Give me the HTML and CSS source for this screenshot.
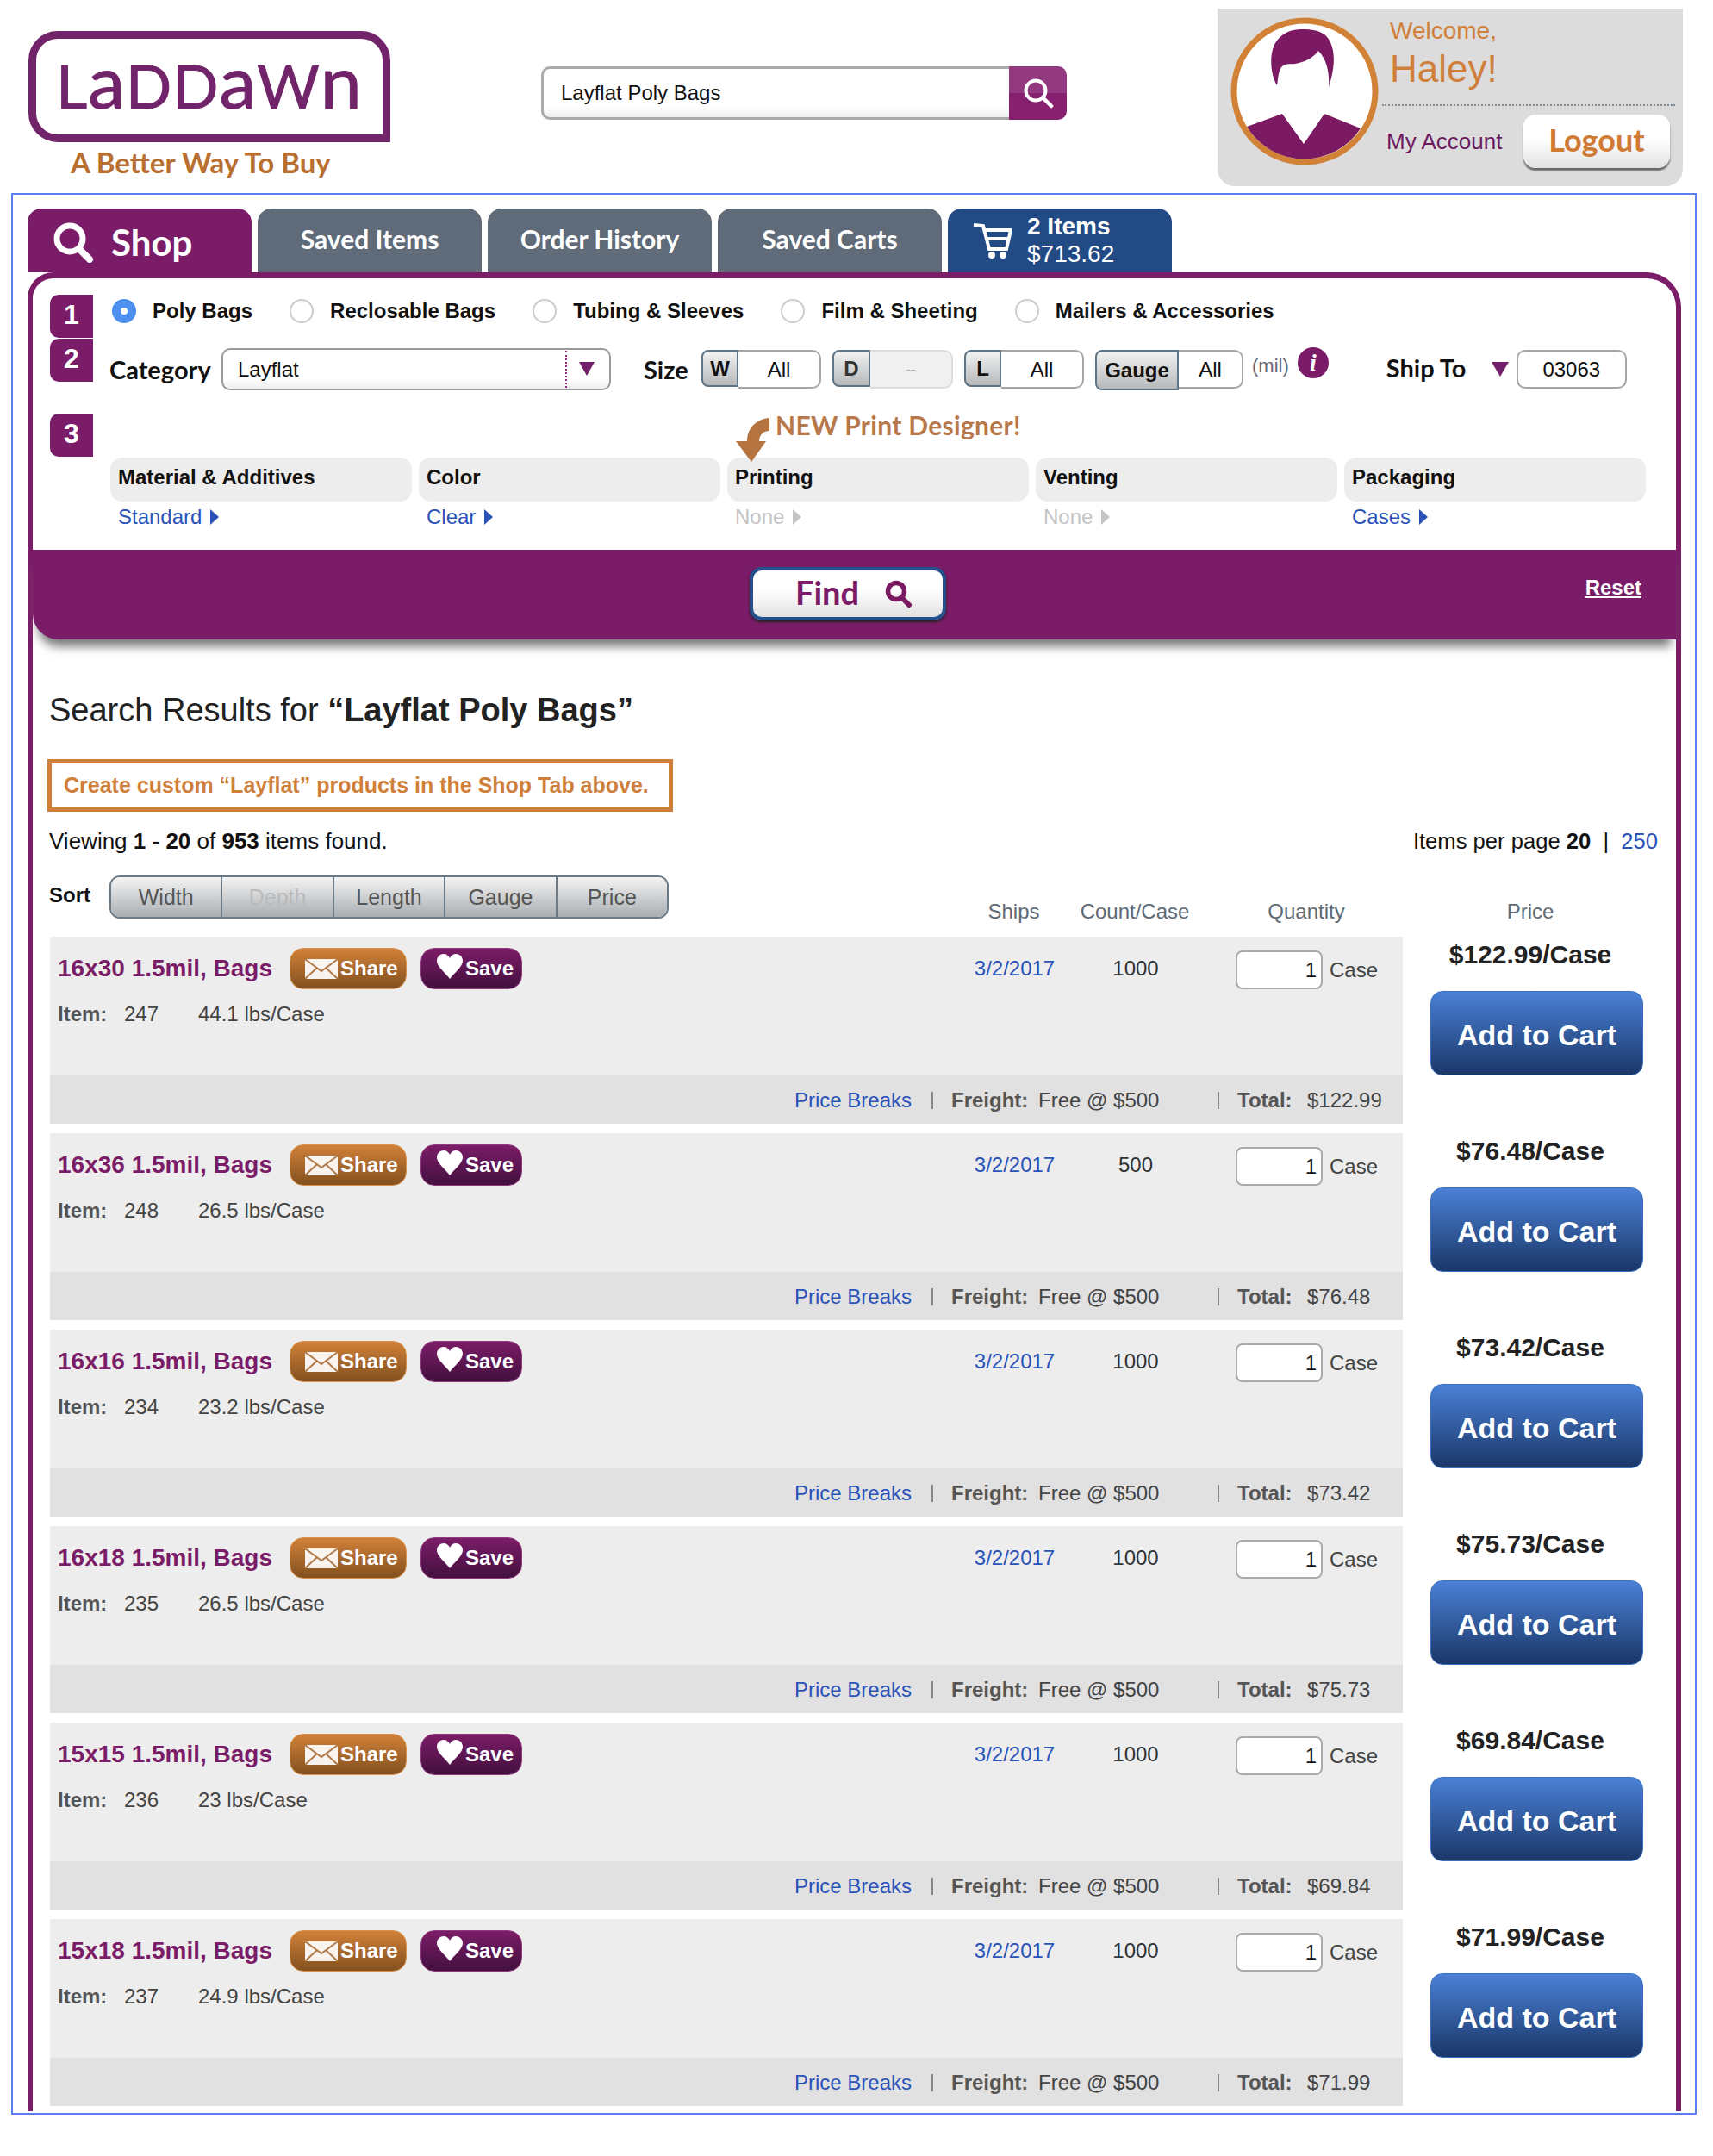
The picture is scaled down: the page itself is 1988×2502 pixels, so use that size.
FILE: index.html
```html
<!doctype html>
<html>
<head>
<meta charset="utf-8">
<title>Laddawn - Search Results</title>
<link rel="stylesheet" href="styles.css">
</head>
<body>
<div class="header">
	<div class="brand">
		<div class="logo"><span>L</span><span class="low">a</span><span>DD</span><span class="low">a</span><span>W</span><span class="low">n</span></div>
		<div class="tagline">A Better Way To Buy</div>
	</div>
	<div class="search">
		<div class="search-text">Layflat Poly Bags</div>
		<div class="search-btn">
			<svg width="36" height="36" viewBox="0 0 36 36"><circle cx="15" cy="15" r="11.5" fill="none" stroke="#fff" stroke-width="4"/><path d="M23 23L33 33" stroke="#fff" stroke-width="4.5" stroke-linecap="round"/></svg>
		</div>
	</div>
	<div class="account">
		<svg class="avatar" width="172" height="172" viewBox="0 0 172 172">
			<circle cx="86" cy="86" r="82" fill="#fff" stroke="#d28236" stroke-width="7"/>
			<path d="M54 79C46 66 44 40 54 27C62 17 72 14 82 14C96 14 104 16 109 20C119 28 125 48 114 81C115 68 113 50 102 39C97 46 88 52 75 54C68 55 61 52 57 62C55 68 55 74 54 79Z" fill="#7b1a62"/>
			<path d="M19 127L60 112L85 147L109 112L151 129A78 78 0 0 1 19 127Z" fill="#7b1a62"/>
		</svg>
		<div class="account-info">
			<div class="welcome">Welcome,</div>
			<div class="hello">Haley!</div>
			<div class="account-row">
				<a class="my-account">My Account</a>
				<div class="logout">Logout</div>
			</div>
		</div>
	</div>
</div>

<div class="main">
	<div class="tabs">
		<div class="tab tab-shop">
			<svg width="50" height="48" viewBox="0 0 50 48"><circle cx="20" cy="20" r="15" fill="none" stroke="#fff" stroke-width="7"/><path d="M31 32L43 44" stroke="#fff" stroke-width="8" stroke-linecap="round"/></svg>
			<span>Shop</span>
		</div>
		<div class="tab">Saved Items</div>
		<div class="tab">Order History</div>
		<div class="tab">Saved Carts</div>
		<div class="tab tab-cart">
			<svg width="46" height="42" viewBox="0 0 46 42"><path d="M2 3L13 4L20 31H40L45 9H15M18 19H42" fill="none" stroke="#fff" stroke-width="4"/><circle cx="23" cy="38" r="4" fill="#fff"/><circle cx="36" cy="38" r="4" fill="#fff"/></svg>
			<div class="cart-text"><b>2 Items</b><span>$713.62</span></div>
		</div>
	</div>

	<div class="shell">
		<div class="filters">
			<div class="step-row step-one">
				<div class="step">1</div>
				<div class="types">
					<label class="type"><i class="radio radio-on"></i>Poly Bags</label>
					<label class="type"><i class="radio"></i>Reclosable Bags</label>
					<label class="type"><i class="radio"></i>Tubing &amp; Sleeves</label>
					<label class="type"><i class="radio"></i>Film &amp; Sheeting</label>
					<label class="type"><i class="radio"></i>Mailers &amp; Accessories</label>
				</div>
			</div>
			<div class="step-row step-two">
				<div class="step">2</div>
				<div class="specs">
					<span class="spec-label label-cat">Category</span>
					<div class="select"><span>Layflat</span><i class="select-arrow"></i></div>
					<span class="spec-label label-size">Size</span>
					<div class="pairs">
						<div class="pair pair-w"><b>W</b><span>All</span></div>
						<div class="pair pair-d"><b>D</b><span>--</span></div>
						<div class="pair pair-l"><b>L</b><span>All</span></div>
						<div class="pair pair-g"><b>Gauge</b><span>All</span></div>
					</div>
					<span class="mil">(mil)</span>
					<span class="info">i</span>
					<span class="spec-label label-ship">Ship To</span>
					<i class="ship-arrow"></i>
					<div class="zip">03063</div>
				</div>
			</div>
			<div class="step-row step-three">
				<div class="step">3</div>
				<svg class="new-arrow" width="40" height="52" viewBox="0 0 40 52"><path d="M39 0V15C32 15 27 20 27 27H35L18 51L0 27H13C13 12 24 1 39 0Z" fill="#b5743f"/></svg>
				<div class="new-print">NEW Print Designer!</div>
			</div>
			<div class="options">
				<div class="option"><div class="option-head">Material &amp; Additives</div><a class="option-val">Standard<i></i></a></div>
				<div class="option"><div class="option-head">Color</div><a class="option-val">Clear<i></i></a></div>
				<div class="option"><div class="option-head">Printing</div><a class="option-val off">None<i></i></a></div>
				<div class="option"><div class="option-head">Venting</div><a class="option-val off">None<i></i></a></div>
				<div class="option"><div class="option-head">Packaging</div><a class="option-val">Cases<i></i></a></div>
			</div>
		</div>
		<div class="findbar">
			<div class="find">
				<span>Find</span>
				<svg width="32" height="32" viewBox="0 0 32 32"><circle cx="13" cy="13" r="9.5" fill="none" stroke="#7b1a62" stroke-width="5.5"/><path d="M20 21L28 29" stroke="#7b1a62" stroke-width="6" stroke-linecap="round"/></svg>
			</div>
			<a class="reset">Reset</a>
		</div>

		<div class="results">
			<h1 class="results-title">Search Results for <b>“Layflat Poly Bags”</b></h1>
			<div class="notice">Create custom “Layflat” products in the Shop Tab above.</div>
			<div class="viewing">
				<div>Viewing <b>1 - 20</b> of <b>953</b> items found.</div>
				<div class="per-page">Items per page <b>20</b>&nbsp; |&nbsp; <a>250</a></div>
			</div>
			<div class="list-head">
				<div class="sort">
					<b>Sort</b>
					<div class="sort-btns"><span>Width</span><span class="off">Depth</span><span>Length</span><span>Gauge</span><span>Price</span></div>
				</div>
				<div class="col-ships">Ships</div>
				<div class="col-count">Count/Case</div>
				<div class="col-qty">Quantity</div>
				<div class="col-price">Price</div>
			</div>

			<div class="item">
				<div class="item-main">
					<div class="item-top">
						<div class="item-desc">
							<div class="item-title"><a>16x30 1.5mil, Bags</a>
								<div class="share"><svg width="40" height="25" viewBox="0 0 40 25"><rect x="1" y="1" width="38" height="23" fill="#fff" opacity=".92"/><path d="M1 1L20 15L39 1M1 24L15 11M39 24L25 11" fill="none" stroke="#b07a48" stroke-width="2"/></svg>Share</div>
								<div class="save"><svg width="30" height="29" viewBox="0 0 30 29"><path d="M15 29C10 22 0 15 0 8C0 3 4 0 8 0C11 0 14 2 15 5C16 2 19 0 22 0C26 0 30 3 30 8C30 15 20 22 15 29Z" fill="#fff"/></svg>Save</div>
							</div>
							<div class="item-line"><b>Item:</b><span class="item-no">247</span><span>44.1 lbs/Case</span></div>
						</div>
						<a class="item-ships">3/2/2017</a>
						<div class="item-count">1000</div>
						<div class="item-qty"><input class="qty" value="1"><span>Case</span></div>
					</div>
					<div class="item-foot"><a class="breaks">Price Breaks</a><i class="sep"></i><b class="l-freight">Freight:</b><span class="free">Free @ $500</span><i class="sep"></i><b class="l-total">Total:</b><span>$122.99</span></div>
				</div>
				<div class="item-side"><div class="item-price">$122.99/Case</div><div class="add">Add to Cart</div></div>
			</div>

			<div class="item">
				<div class="item-main">
					<div class="item-top">
						<div class="item-desc">
							<div class="item-title"><a>16x36 1.5mil, Bags</a>
								<div class="share"><svg width="40" height="25" viewBox="0 0 40 25"><rect x="1" y="1" width="38" height="23" fill="#fff" opacity=".92"/><path d="M1 1L20 15L39 1M1 24L15 11M39 24L25 11" fill="none" stroke="#b07a48" stroke-width="2"/></svg>Share</div>
								<div class="save"><svg width="30" height="29" viewBox="0 0 30 29"><path d="M15 29C10 22 0 15 0 8C0 3 4 0 8 0C11 0 14 2 15 5C16 2 19 0 22 0C26 0 30 3 30 8C30 15 20 22 15 29Z" fill="#fff"/></svg>Save</div>
							</div>
							<div class="item-line"><b>Item:</b><span class="item-no">248</span><span>26.5 lbs/Case</span></div>
						</div>
						<a class="item-ships">3/2/2017</a>
						<div class="item-count">500</div>
						<div class="item-qty"><input class="qty" value="1"><span>Case</span></div>
					</div>
					<div class="item-foot"><a class="breaks">Price Breaks</a><i class="sep"></i><b class="l-freight">Freight:</b><span class="free">Free @ $500</span><i class="sep"></i><b class="l-total">Total:</b><span>$76.48</span></div>
				</div>
				<div class="item-side"><div class="item-price">$76.48/Case</div><div class="add">Add to Cart</div></div>
			</div>

			<div class="item">
				<div class="item-main">
					<div class="item-top">
						<div class="item-desc">
							<div class="item-title"><a>16x16 1.5mil, Bags</a>
								<div class="share"><svg width="40" height="25" viewBox="0 0 40 25"><rect x="1" y="1" width="38" height="23" fill="#fff" opacity=".92"/><path d="M1 1L20 15L39 1M1 24L15 11M39 24L25 11" fill="none" stroke="#b07a48" stroke-width="2"/></svg>Share</div>
								<div class="save"><svg width="30" height="29" viewBox="0 0 30 29"><path d="M15 29C10 22 0 15 0 8C0 3 4 0 8 0C11 0 14 2 15 5C16 2 19 0 22 0C26 0 30 3 30 8C30 15 20 22 15 29Z" fill="#fff"/></svg>Save</div>
							</div>
							<div class="item-line"><b>Item:</b><span class="item-no">234</span><span>23.2 lbs/Case</span></div>
						</div>
						<a class="item-ships">3/2/2017</a>
						<div class="item-count">1000</div>
						<div class="item-qty"><input class="qty" value="1"><span>Case</span></div>
					</div>
					<div class="item-foot"><a class="breaks">Price Breaks</a><i class="sep"></i><b class="l-freight">Freight:</b><span class="free">Free @ $500</span><i class="sep"></i><b class="l-total">Total:</b><span>$73.42</span></div>
				</div>
				<div class="item-side"><div class="item-price">$73.42/Case</div><div class="add">Add to Cart</div></div>
			</div>

			<div class="item">
				<div class="item-main">
					<div class="item-top">
						<div class="item-desc">
							<div class="item-title"><a>16x18 1.5mil, Bags</a>
								<div class="share"><svg width="40" height="25" viewBox="0 0 40 25"><rect x="1" y="1" width="38" height="23" fill="#fff" opacity=".92"/><path d="M1 1L20 15L39 1M1 24L15 11M39 24L25 11" fill="none" stroke="#b07a48" stroke-width="2"/></svg>Share</div>
								<div class="save"><svg width="30" height="29" viewBox="0 0 30 29"><path d="M15 29C10 22 0 15 0 8C0 3 4 0 8 0C11 0 14 2 15 5C16 2 19 0 22 0C26 0 30 3 30 8C30 15 20 22 15 29Z" fill="#fff"/></svg>Save</div>
							</div>
							<div class="item-line"><b>Item:</b><span class="item-no">235</span><span>26.5 lbs/Case</span></div>
						</div>
						<a class="item-ships">3/2/2017</a>
						<div class="item-count">1000</div>
						<div class="item-qty"><input class="qty" value="1"><span>Case</span></div>
					</div>
					<div class="item-foot"><a class="breaks">Price Breaks</a><i class="sep"></i><b class="l-freight">Freight:</b><span class="free">Free @ $500</span><i class="sep"></i><b class="l-total">Total:</b><span>$75.73</span></div>
				</div>
				<div class="item-side"><div class="item-price">$75.73/Case</div><div class="add">Add to Cart</div></div>
			</div>

			<div class="item">
				<div class="item-main">
					<div class="item-top">
						<div class="item-desc">
							<div class="item-title"><a>15x15 1.5mil, Bags</a>
								<div class="share"><svg width="40" height="25" viewBox="0 0 40 25"><rect x="1" y="1" width="38" height="23" fill="#fff" opacity=".92"/><path d="M1 1L20 15L39 1M1 24L15 11M39 24L25 11" fill="none" stroke="#b07a48" stroke-width="2"/></svg>Share</div>
								<div class="save"><svg width="30" height="29" viewBox="0 0 30 29"><path d="M15 29C10 22 0 15 0 8C0 3 4 0 8 0C11 0 14 2 15 5C16 2 19 0 22 0C26 0 30 3 30 8C30 15 20 22 15 29Z" fill="#fff"/></svg>Save</div>
							</div>
							<div class="item-line"><b>Item:</b><span class="item-no">236</span><span>23 lbs/Case</span></div>
						</div>
						<a class="item-ships">3/2/2017</a>
						<div class="item-count">1000</div>
						<div class="item-qty"><input class="qty" value="1"><span>Case</span></div>
					</div>
					<div class="item-foot"><a class="breaks">Price Breaks</a><i class="sep"></i><b class="l-freight">Freight:</b><span class="free">Free @ $500</span><i class="sep"></i><b class="l-total">Total:</b><span>$69.84</span></div>
				</div>
				<div class="item-side"><div class="item-price">$69.84/Case</div><div class="add">Add to Cart</div></div>
			</div>

			<div class="item">
				<div class="item-main">
					<div class="item-top">
						<div class="item-desc">
							<div class="item-title"><a>15x18 1.5mil, Bags</a>
								<div class="share"><svg width="40" height="25" viewBox="0 0 40 25"><rect x="1" y="1" width="38" height="23" fill="#fff" opacity=".92"/><path d="M1 1L20 15L39 1M1 24L15 11M39 24L25 11" fill="none" stroke="#b07a48" stroke-width="2"/></svg>Share</div>
								<div class="save"><svg width="30" height="29" viewBox="0 0 30 29"><path d="M15 29C10 22 0 15 0 8C0 3 4 0 8 0C11 0 14 2 15 5C16 2 19 0 22 0C26 0 30 3 30 8C30 15 20 22 15 29Z" fill="#fff"/></svg>Save</div>
							</div>
							<div class="item-line"><b>Item:</b><span class="item-no">237</span><span>24.9 lbs/Case</span></div>
						</div>
						<a class="item-ships">3/2/2017</a>
						<div class="item-count">1000</div>
						<div class="item-qty"><input class="qty" value="1"><span>Case</span></div>
					</div>
					<div class="item-foot"><a class="breaks">Price Breaks</a><i class="sep"></i><b class="l-freight">Freight:</b><span class="free">Free @ $500</span><i class="sep"></i><b class="l-total">Total:</b><span>$71.99</span></div>
				</div>
				<div class="item-side"><div class="item-price">$71.99/Case</div><div class="add">Add to Cart</div></div>
			</div>
		</div>
	</div>
</div>
</body>
</html>
```

FILE: styles.css
```css
*{margin: 0;padding: 0;box-sizing: border-box;}
body{
	background: #fff;
	color: #111;
	font-family: "Liberation Sans", Arial, sans-serif;
	font-size: 24px;
}
i{font-style: normal;}
a{color: #2a52b8;}

/* header */
.header{
	display: flex;
	align-items: flex-start;
	height: 224px;
	padding-left: 33px;
}
.brand{
	width: 420px;
	margin-top: 36px;
}
.logo{
	display: flex;
	align-items: baseline;
	justify-content: center;
	width: 420px;
	height: 129px;
	padding-top: 3px;
	border: 9px solid #72246a;
	border-radius: 34px 34px 0 34px;
	color: #72246a;
	font-family: Lato, sans-serif;
	font-size: 70px;
	line-height: 90px;
	letter-spacing: 1px;
	-webkit-text-stroke: 1px #72246a;
}
.logo .low{font-size: 86px;}
.tagline{
	margin-top: 3px;
	padding-left: 49px;
	color: #b96f2f;
	font-family: Lato, sans-serif;
	font-size: 33px;
	font-weight: 700;
	line-height: 40px;
}
.search{
	display: flex;
	margin-top: 77px;
	margin-left: 175px;
}
.search-text{
	width: 543px;
	height: 62px;
	padding-left: 20px;
	border: 3px solid #aaa;
	border-right: none;
	border-radius: 10px 0 0 10px;
	background: linear-gradient(#fff 80%, #eee);
	line-height: 56px;
}
.search-btn{
	display: flex;
	align-items: center;
	justify-content: center;
	width: 67px;
	height: 62px;
	border-radius: 0 10px 10px 0;
	background: linear-gradient(#93397f 50%, #86206f 50%);
}
.account{
	display: flex;
	width: 540px;
	height: 206px;
	margin-top: 10px;
	margin-left: 175px;
	padding: 10px 9px 0 15px;
	background: #dcdcdc;
	border-radius: 0 0 20px 20px;
}
.avatar{flex: none;}
.account-info{
	flex: 1;
	margin-left: 4px;
}
.welcome{
	height: 30px;
	padding-top: 1px;
	padding-left: 9px;
	color: #d07f3a;
	font-size: 28px;
	line-height: 30px;
}
.hello{
	height: 62px;
	padding-left: 9px;
	color: #d07f3a;
	font-size: 44px;
	line-height: 60px;
}
.account-row{
	display: flex;
	align-items: center;
	margin-top: 9px;
	padding-top: 10px;
	border-top: 2px dotted #7d8a94;
}
.my-account{
	width: 164px;
	padding-left: 5px;
	color: #6d1a5d;
	font-size: 26px;
}
.logout{
	width: 170px;
	height: 62px;
	border-radius: 14px;
	background: linear-gradient(#fff 45%, #e2e2e2);
	box-shadow: 0 3px 2px #666;
	color: #d07a33;
	font-family: Lato, sans-serif;
	font-size: 36px;
	font-weight: 700;
	line-height: 58px;
	text-align: center;
}

/* main box */
.main{
	width: 1956px;
	height: 2230px;
	margin-left: 13px;
	padding: 16px 0 0 17px;
	border: 2px solid #5b7ff0;
	overflow: hidden;
}
.tabs{
	display: flex;
	gap: 7px;
	height: 74px;
}
.tab{
	display: flex;
	align-items: center;
	justify-content: center;
	width: 260px;
	height: 74px;
	padding-bottom: 4px;
	border-radius: 16px 16px 0 0;
	background: #5f6b78;
	color: #fff;
	font-family: Lato, sans-serif;
	font-size: 30px;
	font-weight: 700;
}
.tab-shop{
	justify-content: flex-start;
	padding: 4px 0 0 29px;
	background: #7b1c68;
	font-size: 42px;
}
.tab-shop span{margin-left: 18px;}
.tab-cart{
	justify-content: flex-start;
	padding: 0 0 0 28px;
	background: #224b85;
	font-family: "Liberation Sans", Arial, sans-serif;
}
.cart-text{
	margin-left: 18px;
	font-size: 28px;
	line-height: 32px;
}
.cart-text b,.cart-text span{display: block;}
.cart-text span{font-weight: 400;}

.shell{
	width: 1919px;
	height: 2134px;
	border: solid #7b1c68;
	border-width: 7px 6px 0;
	border-radius: 30px 40px 0 0;
}
.filters{
	height: 315px;
	padding: 19px 0 0 20px;
}
.step-row{display: flex;}
.step{
	flex: none;
	width: 50px;
	height: 50px;
	border-radius: 10px 0 0 10px;
	background: #7b1c68;
	color: #fff;
	font-size: 32px;
	font-weight: 700;
	line-height: 47px;
	text-align: center;
}
.step-one{height: 51px;}
.types{
	display: flex;
	gap: 43px;
	height: 38px;
	margin-left: 22px;
}
.type{
	display: flex;
	align-items: center;
	gap: 19px;
	font-weight: 700;
}
.radio{
	width: 28px;
	height: 28px;
	border: 2px solid #ccc;
	border-radius: 50%;
	background: #fff;
}
.radio-on{
	border: 10px solid #4d90f0;
}
.step-two{height: 87px;}
.specs{
	display: flex;
	align-items: center;
	height: 70px;
	margin-left: 19px;
}
.spec-label{
	color: #111;
	font-family: Lato, sans-serif;
	font-size: 29px;
	font-weight: 700;
	white-space: nowrap;
}
.label-cat{width: 130px;}
.select{
	display: flex;
	align-items: center;
	width: 452px;
	height: 49px;
	padding-left: 17px;
	border: 2px solid #9a9a9a;
	border-radius: 10px;
	background: linear-gradient(#fff 75%, #eee);
}
.select span{
	width: 382px;
	height: 43px;
	border-right: 2px dotted #8a2a78;
	line-height: 43px;
}
.select-arrow{
	margin-left: 14px;
	border-top: 16px solid #72206a;
	border-left: 9px solid transparent;
	border-right: 9px solid transparent;
}
.label-size{
	width: 67px;
	margin-left: 38px;
}
.pairs{
	display: flex;
	align-items: flex-start;
	gap: 13px;
	height: 47px;
	margin-top: 2px;
}
.pair{
	display: flex;
	align-items: flex-start;
}
.pair b{
	width: 43px;
	height: 43px;
	border: 2px solid #5f7484;
	border-radius: 8px 0 0 8px;
	background: linear-gradient(#f2f2f2, #b5b8ba);
	line-height: 39px;
	text-align: center;
}
.pair span{
	width: 96px;
	height: 45px;
	border: 2px solid #a5a5a5;
	border-left: none;
	border-radius: 0 10px 10px 0;
	background: #fff;
	line-height: 41px;
	text-align: center;
}
.pair-d{color: #333;}
.pair-d b{width: 44px;}
.pair-d span{
	background: #f0f0f0;
	border-color: #ddd;
	color: #aaa;
	font-size: 16px;
}
.pair-g b{
	width: 97px;
	height: 47px;
	line-height: 43px;
}
.pair-g span{width: 75px;}
.mil{
	margin-left: 10px;
	margin-bottom: 6px;
	color: #667;
	font-size: 22px;
}
.info{
	width: 36px;
	height: 36px;
	margin-left: 10px;
	margin-bottom: 14px;
	border-radius: 50%;
	background: #7b1c68;
	color: #fff;
	font-family: "Liberation Serif", serif;
	font-size: 28px;
	font-style: italic;
	font-weight: 700;
	line-height: 36px;
	text-align: center;
}
.label-ship{
	width: 122px;
	margin-left: 67px;
	margin-bottom: 4px;
}
.ship-arrow{
	border-top: 17px solid #72206a;
	border-left: 10px solid transparent;
	border-right: 10px solid transparent;
}
.zip{
	width: 128px;
	height: 45px;
	margin-left: 9px;
	border: 2px solid #a5a5a5;
	border-radius: 10px;
	line-height: 41px;
	text-align: center;
}
.step-three{height: 51px;}
.new-arrow{
	position: relative;
	z-index: 1;
	flex: none;
	margin-top: 5px;
	margin-left: 746px;
}
.new-print{
	margin-left: 6px;
	color: #b8784a;
	font-family: Lato, sans-serif;
	font-size: 30px;
	font-weight: 700;
	letter-spacing: .3px;
	line-height: 26px;
}
.options{
	display: grid;
	grid-template-columns: repeat(5, 350px);
	gap: 8px;
	margin-left: 70px;
}
.option-head{
	height: 51px;
	padding-left: 9px;
	border-radius: 14px;
	background: #ededed;
	font-weight: 700;
	line-height: 46px;
}
.option-val{
	display: flex;
	align-items: center;
	height: 36px;
	padding-left: 9px;
}
.option-val i{
	margin-left: 10px;
	border-left: 10px solid #2a52b8;
	border-top: 9px solid transparent;
	border-bottom: 9px solid transparent;
}
.option-val.off{color: #c4c4c4;}
.option-val.off i{border-left-color: #c4c4c4;}

.findbar{
	display: flex;
	align-items: flex-start;
	height: 104px;
	border-radius: 0 0 0 30px;
	background: #7b1c68;
	box-shadow: 0 14px 12px -6px #777;
}
.find{
	display: flex;
	align-items: center;
	width: 228px;
	height: 62px;
	margin-top: 20px;
	margin-left: 832px;
	padding: 0 0 5px 49px;
	border: 4px solid #24508c;
	border-radius: 14px;
	background: linear-gradient(#fff 40%, #e2e2e2);
	box-shadow: 0 2px 3px #222;
	color: #7b1c68;
	font-family: Lato, sans-serif;
	font-size: 38px;
	font-weight: 700;
}
.find svg{margin: 5px 0 0 30px;}
.reset{
	margin-top: 30px;
	margin-left: auto;
	margin-right: 40px;
	color: #fff;
	font-weight: 700;
	line-height: 28px;
	text-decoration: underline;
}

/* results */
.results{
	padding: 60px 0 0 20px;
}
.results-title{
	height: 44px;
	margin-left: -1px;
	color: #222;
	font-size: 38px;
	font-weight: 400;
	line-height: 44px;
}
.notice{
	width: 726px;
	height: 61px;
	margin-top: 35px;
	margin-left: -3px;
	padding-left: 14px;
	border: 5px solid #d07f3a;
	color: #d07f3a;
	font-size: 25px;
	font-weight: 700;
	line-height: 51px;
}
.viewing{
	display: flex;
	justify-content: space-between;
	height: 32px;
	margin-top: 18px;
	padding-right: 21px;
	margin-left: -1px;
	font-size: 26px;
	line-height: 32px;
}
.per-page{font-size: 25.6px;}
.list-head{
	display: flex;
	align-items: flex-end;
	height: 79px;
	margin-top: 16px;
	padding-bottom: 15px;
	color: #5e6a75;
	line-height: 28px;
	text-align: center;
}
.sort{
	display: flex;
	align-self: flex-start;
	align-items: center;
	width: 1052px;
	margin-top: 8px;
	margin-left: -1px;
	color: #111;
}
.sort b{
	width: 70px;
	margin-bottom: 4px;
	text-align: left;
}
.sort-btns{
	display: flex;
	width: 649px;
	height: 50px;
	border: 2px solid #6b7a85;
	border-radius: 12px;
	overflow: hidden;
}
.sort-btns span{
	flex: 1;
	border-left: 2px solid #6b7a85;
	background: linear-gradient(#f4f4f4, #a9aeb1);
	color: #555;
	font-size: 25px;
	line-height: 46px;
}
.sort-btns span:first-child{border-left: none;}
.sort-btns .off{color: #bbb;}
.col-ships{width: 135px;}
.col-count{width: 146px;}
.col-qty{width: 252px;}
.col-price{width: 268px;}

.item{
	display: flex;
	height: 217px;
	margin-bottom: 11px;
}
.item-main{width: 1570px;}
.item-top{
	display: flex;
	height: 161px;
	background: #ededed;
}
.item-desc{
	width: 1052px;
	padding: 13px 0 0 9px;
}
.item-title{
	display: flex;
	align-items: center;
	height: 48px;
}
.item-title a{
	width: 269px;
	color: #7b1c68;
	font-size: 28px;
	font-weight: 700;
}
.share,.save{
	display: flex;
	align-items: center;
	height: 48px;
	border-radius: 16px;
	color: #fff;
	font-size: 24px;
	font-weight: 700;
}
.share{
	width: 136px;
	padding-left: 16px;
	border: 1px solid #d9924c;
	background: linear-gradient(#d08138, #83501f);
}
.share svg{margin-right: 2px;}
.save{
	width: 118px;
	margin-left: 16px;
	padding-left: 18px;
	border: 1px solid #8f3a80;
	background: linear-gradient(#7b1c68, #43103e);
}
.save svg{margin: -6px 3px 0 0;}
.item-line{
	display: flex;
	margin-top: 15px;
	color: #444;
	line-height: 28px;
}
.item-line b{
	width: 77px;
	color: #555;
}
.item-no{width: 86px;}
.item-ships,.item-count{
	width: 135px;
	padding-top: 23px;
	line-height: 28px;
	text-align: center;
}
.item-count{
	width: 146px;
	color: #333;
}
.item-qty{
	display: flex;
	align-items: flex-start;
	padding: 16px 0 0 43px;
	color: #444;
}
.qty{
	width: 101px;
	height: 45px;
	padding-right: 5px;
	border: 2px solid #aaa;
	border-radius: 8px;
	color: #111;
	font-family: "Liberation Sans", Arial, sans-serif;
	font-size: 24px;
	text-align: right;
}
.item-qty span{
	margin-left: 8px;
	line-height: 46px;
}
.item-foot{
	display: flex;
	align-items: center;
	height: 56px;
	padding: 2px 0 0 864px;
	background: #e1e1e1;
	color: #444;
}
.breaks{width: 159px;}
.sep{
	width: 23px;
	height: 20px;
	border-left: 2px solid #888;
}
.l-freight{
	width: 101px;
	color: #555;
}
.free{width: 208px;}
.l-total{
	width: 81px;
	color: #555;
}
.item-side{
	width: 247px;
	margin-left: 32px;
}
.item-price{
	width: 232px;
	height: 42px;
	margin-bottom: 21px;
	color: #222;
	font-size: 30px;
	font-weight: 700;
	line-height: 42px;
	text-align: center;
}
.add{
	height: 98px;
	border: 1px solid #3a6fc4;
	border-radius: 14px;
	background: linear-gradient(#4a80d6, #1a3768);
	color: #fff;
	font-size: 34px;
	font-weight: 700;
	line-height: 100px;
	text-align: center;
}
```
